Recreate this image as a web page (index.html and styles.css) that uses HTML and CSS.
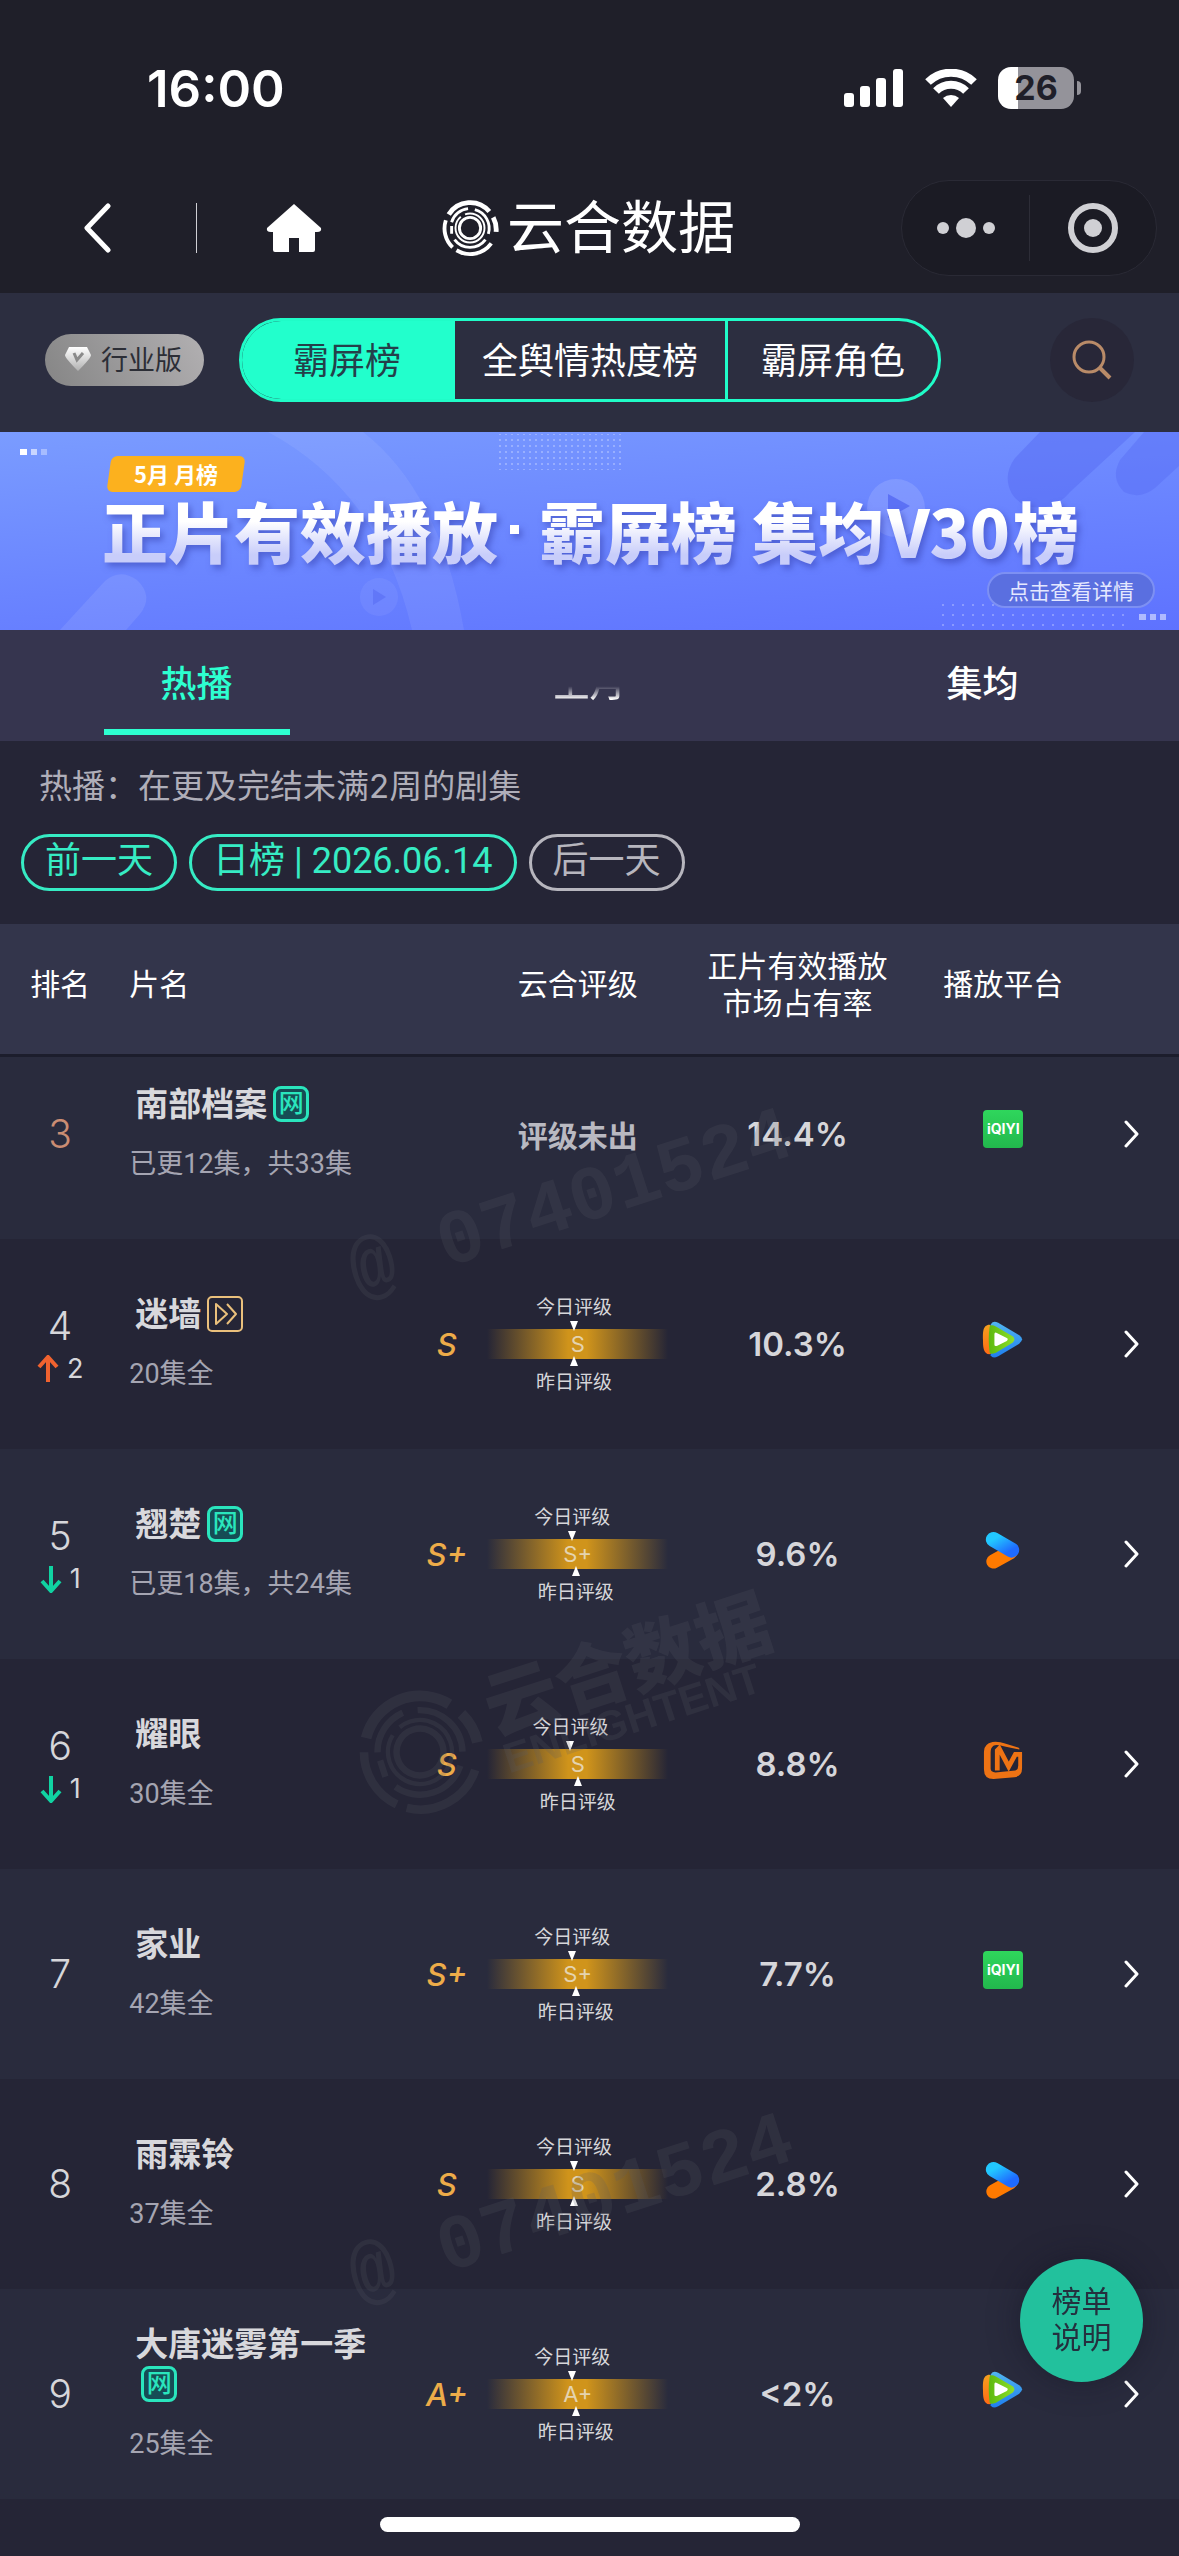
FILE: index.html
```html
<!DOCTYPE html>
<html lang="zh-CN">
<head>
    <meta charset="UTF-8">
    <meta name="viewport" content="width=device-width, initial-scale=1.0">
    <title>云合数据</title>
    <link rel="stylesheet" href="styles.css">
</head>
<body>

    <!-- shared icons -->
    <svg class="sprite" aria-hidden="true">
        <defs>
            <linearGradient id="txBlue" x1="0" y1="0" x2="0" y2="1">
                <stop offset="0" stop-color="#52b6f0"/>
                <stop offset="1" stop-color="#1f7ff0"/>
            </linearGradient>
            <linearGradient id="txOrange" x1="0" y1="0" x2="0" y2="1">
                <stop offset="0" stop-color="#f5a01e"/>
                <stop offset="1" stop-color="#ff6a14"/>
            </linearGradient>
            <linearGradient id="txGreen" x1="0" y1="0" x2="1" y2="0">
                <stop offset="0" stop-color="#5cb80e"/>
                <stop offset="1" stop-color="#8ee02a"/>
            </linearGradient>
            <linearGradient id="ykBlue" x1="0" y1="0" x2="1" y2="1">
                <stop offset="0" stop-color="#22c8ff"/>
                <stop offset="1" stop-color="#1f6bff"/>
            </linearGradient>
            <linearGradient id="gem" x1="0" y1="0" x2="0" y2="1">
                <stop offset="0" stop-color="#ffffff"/>
                <stop offset="1" stop-color="#b0b0b0"/>
            </linearGradient>
        </defs>
        <symbol id="logo" viewBox="0 0 60 60">
            <g fill="none" stroke="currentColor">
                <path d="M8 16A26 26 0 0 1 50 13M54 19A27 27 0 0 1 57 34" stroke-width="5"/>
                <path d="M5 22A27 27 0 0 0 12 50M16 53A27 27 0 0 0 52 46" stroke-width="4"/>
                <path d="M11 24A20 20 0 0 1 28 10M35 11A20 20 0 0 1 49 36M46 42A20 20 0 0 1 14 42M11 36V28" stroke-width="3"/>
                <circle cx="30" cy="30" r="15" stroke-width="2" stroke-dasharray="60 5"/>
                <circle cx="30" cy="30" r="11" stroke-width="3"/>
            </g>
        </symbol>
        <symbol id="tencent" viewBox="0 0 42 42">
            <path d="M8 5Q10 0 16 3L38 16Q44 20 38 25L16 38Q10 41 8 37Z" fill="url(#txBlue)"/>
            <path d="M7 5C-1 5 0 15 0 21S0 36 7 36Q12 34 11 20T7 5Z" fill="url(#txOrange)"/>
            <path d="M7 7Q8 4 14 7L31 17Q35 20 31 24L14 34Q8 37 7 34Q5 20 7 7Z" fill="url(#txGreen)"/>
            <path d="M12 15Q12 12 15 14L25 19Q27 20 25 22L15 27Q12 28 12 26Z" fill="#fff"/>
        </symbol>
        <symbol id="youku" viewBox="0 0 42 42">
            <path d="M11 33L29 23" stroke="#ff7a00" stroke-width="15" stroke-linecap="round"/>
            <path d="M11 10L30 21" stroke="url(#ykBlue)" stroke-width="16" stroke-linecap="round"/>
        </symbol>
        <symbol id="mango" viewBox="0 0 42 42">
            <path fill-rule="evenodd" fill="#ee7314" d="M10 2Q16 1 24 4L37 8Q39 9 38 10L24 7Q14 4 11 6Q8 8 8 13V30Q8 34 13 34L34 32Q37 31 37 27V15H41V30Q41 38 33 39L11 41Q1 41 1 31V12Q1 4 10 2Z"/>
            <path d="M15 32V11L17 9L27 28L34 15H41" fill="none" stroke="#ee7314" stroke-width="5"/>
        </symbol>
        <symbol id="next" viewBox="0 0 16 28">
            <path d="M2 2L13 14L2 26" fill="none" stroke="#fff" stroke-width="3" stroke-linecap="round" stroke-linejoin="round"/>
        </symbol>
        <symbol id="down" viewBox="0 0 22 28">
            <path d="M11 1V26M2 16L11 26L20 16" fill="none" stroke="currentColor" stroke-width="4"/>
        </symbol>
        <symbol id="member" viewBox="0 0 36 36">
            <rect x="1" y="1" width="34" height="34" rx="4" fill="none" stroke="#eac07c" stroke-width="2"/>
            <path d="M9 8V28L20 18ZM20 8L29 18L20 28" fill="none" stroke="#eac07c" stroke-width="2" stroke-linejoin="round"/>
        </symbol>
    </svg>

    <header class="top">
        <div class="status">
            <span class="time">16:00</span>
            <div class="status-icons">
                <svg width="60" height="38" viewBox="0 0 60 38" fill="#fff">
                    <rect x="0" y="24" width="10" height="14" rx="3"/>
                    <rect x="16" y="17" width="10" height="21" rx="3"/>
                    <rect x="32" y="9" width="10" height="29" rx="3"/>
                    <rect x="49" y="0" width="10" height="38" rx="3"/>
                </svg>
                <svg width="52" height="38" viewBox="0 0 52 38" fill="none" stroke="#fff" stroke-width="8">
                    <path d="M3 13A33 33 0 0 1 49 13"/>
                    <path d="M11 22A21 21 0 0 1 41 22"/>
                    <path d="M26 38L18 29A12 12 0 0 1 34 29Z" fill="#fff" stroke="none"/>
                </svg>
                <div class="battery"><span>26</span></div>
            </div>
        </div>
        <nav class="nav">
            <div class="nav-left">
                <button class="icon-btn" aria-label="返回">
                    <svg width="28" height="50" viewBox="0 0 28 50"><path d="M25 3L4 25L25 47" fill="none" stroke="#fff" stroke-width="5" stroke-linecap="round" stroke-linejoin="round"/></svg>
                </button>
                <span class="nav-line"></span>
                <button class="icon-btn" aria-label="首页">
                    <svg width="56" height="50" viewBox="0 0 56 50"><path d="M28 1L55 25Q56 29 51 29H49V47Q49 49 47 49H33V35H23V49H9Q7 49 7 47V29H5Q0 29 1 25Z" fill="#fff"/></svg>
                </button>
            </div>
            <h1 class="brand"><svg class="brand-logo"><use href="#logo"/></svg>云合数据</h1>
            <div class="capsule">
                <button class="icon-btn" aria-label="更多">
                    <svg width="60" height="24" viewBox="0 0 60 24" fill="#d0d0d4"><circle cx="7" cy="12" r="6"/><circle cx="30" cy="12" r="10"/><circle cx="53" cy="12" r="6"/></svg>
                </button>
                <button class="icon-btn" aria-label="关闭">
                    <svg width="52" height="52" viewBox="0 0 52 52"><circle cx="26" cy="26" r="22" fill="none" stroke="#d0d0d4" stroke-width="6"/><circle cx="26" cy="26" r="9" fill="#d0d0d4"/></svg>
                </button>
            </div>
        </nav>
    </header>

    <div class="toolbar">
        <button class="edition">
            <svg width="28" height="26" viewBox="0 0 28 26"><path d="M5 1H23L27 9Q27 12 14 25Q1 12 1 9Z" fill="url(#gem)"/><path d="M10 7L13 14L19 7" fill="none" stroke="#8a8a8a" stroke-width="3"/></svg>
            行业版
        </button>
        <div class="segments">
            <button class="segment on">霸屏榜</button>
            <button class="segment">全舆情热度榜</button>
            <button class="segment">霸屏角色</button>
        </div>
        <button class="search" aria-label="搜索">
            <svg width="40" height="40" viewBox="0 0 40 40" fill="none" stroke="#b98b68" stroke-width="3"><circle cx="17" cy="17" r="15"/><path d="M28 28L38 38" stroke-width="4"/></svg>
        </button>
    </div>

    <section class="banner">
        <svg class="banner-bg" viewBox="0 0 1179 198" preserveAspectRatio="xMidYMid slice" aria-hidden="true">
            <defs>
                <pattern id="dots" width="6" height="6" patternUnits="userSpaceOnUse"><circle cx="2" cy="2" r="1" fill="#fff"/></pattern>
                <pattern id="dotsWide" width="10" height="10" patternUnits="userSpaceOnUse"><circle cx="3" cy="3" r="1" fill="#fff"/></pattern>
            </defs>
            <path d="M268 0Q380 60 412 198H464Q440 60 363 0Z" fill="#fff" opacity=".07"/>
            <path d="M60 198L105 149Q120 136 137 148Q154 164 140 182L126 198Z" fill="#fff" opacity=".09"/>
            <path d="M1040 0L1015 26Q1002 44 1012 62Q1024 80 1050 74Q1062 70 1070 60L1135 0Z" fill="#5468f2" opacity=".45"/>
            <path d="M1144 0L1120 28Q1110 46 1124 60Q1140 68 1155 56L1179 34V0Z" fill="#5468f2" opacity=".4"/>
            <rect x="496" y="2" width="126" height="36" fill="url(#dots)" opacity=".35"/>
            <rect x="937" y="168" width="195" height="26" fill="url(#dotsWide)" opacity=".35"/>
            <circle cx="379" cy="165" r="19" fill="#fff" opacity=".06"/>
            <path d="M373 157L386 165L373 173Z" fill="#5468f2" opacity=".5"/>
            <circle cx="896" cy="76" r="29" fill="#fff" opacity=".13"/>
            <path d="M888 62L910 74L888 86Z" fill="#5468f2" opacity=".8"/>
            <g fill="#fff">
                <rect x="20" y="17" width="7" height="6"/>
                <rect x="31" y="17" width="6" height="6" opacity=".6"/>
                <rect x="41" y="17" width="6" height="6" opacity=".35"/>
                <path d="M1139 182h7v6h-7zM1150 182h6v6h-6zM1160 182h6v6h-6z" opacity=".5"/>
            </g>
        </svg>
        <span class="month">5月 月榜</span>
        <h2 class="headline">正片有效播放<i></i>霸屏榜 集均<span>V30</span>榜</h2>
        <a class="detail" href="#">点击查看详情</a>
    </section>

    <div class="tabs">
        <button class="tab on">热播</button>
        <button class="tab"><span class="fading">上月</span></button>
        <button class="tab">集均</button>
    </div>

    <p class="intro">热播：在更及完结未满2周的剧集</p>
    <div class="dates">
        <button class="date">前一天</button>
        <button class="date">日榜 | 2026.06.14</button>
        <button class="date off">后一天</button>
    </div>

    <main class="ranking">
        <table>
            <colgroup>
                <col class="c-rank"><col class="c-name"><col class="c-level"><col class="c-grade"><col class="c-share"><col class="c-platform"><col class="c-next">
            </colgroup>
            <thead>
                <tr>
                    <th>排名</th>
                    <th class="name">片名</th>
                    <th></th>
                    <th>云合评级</th>
                    <th>正片有效播放<br>市场占有率</th>
                    <th>播放平台</th>
                    <th></th>
                </tr>
            </thead>
            <tbody>
                <tr class="cut">
                    <td><div class="rank third">3</div></td>
                    <td class="name"><div class="title">南部档案<span class="tag">网</span></div><div class="sub">已更12集，共33集</div></td>
                    <td class="level"></td>
                    <td class="pending">评级未出</td>
                    <td class="share">14.4%</td>
                    <td><div class="iqiyi">iQIYI</div></td>
                    <td class="more"><svg class="next"><use href="#next"/></svg></td>
                </tr>
                <tr>
                    <td><div class="rank">4</div><div class="move up"><svg><use href="#down"/></svg>2</div></td>
                    <td class="name"><div class="title">迷墙<svg class="member"><use href="#member"/></svg></div><div class="sub">20集全</div></td>
                    <td class="level">S</td>
                    <td><div class="grade"><span class="today" style="left:48%">今日评级</span><b>S</b><span class="yesterday" style="left:48%">昨日评级</span></div></td>
                    <td class="share">10.3%</td>
                    <td><svg class="platform"><use href="#tencent"/></svg></td>
                    <td class="more"><svg class="next"><use href="#next"/></svg></td>
                </tr>
                <tr>
                    <td><div class="rank">5</div><div class="move"><svg><use href="#down"/></svg>1</div></td>
                    <td class="name"><div class="title">翘楚<span class="tag">网</span></div><div class="sub">已更18集，共24集</div></td>
                    <td class="level">S+</td>
                    <td><div class="grade"><span class="today" style="left:47%">今日评级</span><b>S+</b><span class="yesterday" style="left:49%">昨日评级</span></div></td>
                    <td class="share">9.6%</td>
                    <td><svg class="platform"><use href="#youku"/></svg></td>
                    <td class="more"><svg class="next"><use href="#next"/></svg></td>
                </tr>
                <tr>
                    <td><div class="rank">6</div><div class="move"><svg><use href="#down"/></svg>1</div></td>
                    <td class="name"><div class="title">耀眼</div><div class="sub">30集全</div></td>
                    <td class="level">S</td>
                    <td><div class="grade"><span class="today" style="left:46%">今日评级</span><b>S</b><span class="yesterday" style="left:50%">昨日评级</span></div></td>
                    <td class="share">8.8%</td>
                    <td><svg class="platform"><use href="#mango"/></svg></td>
                    <td class="more"><svg class="next"><use href="#next"/></svg></td>
                </tr>
                <tr>
                    <td><div class="rank">7</div></td>
                    <td class="name"><div class="title">家业</div><div class="sub">42集全</div></td>
                    <td class="level">S+</td>
                    <td><div class="grade"><span class="today" style="left:47%">今日评级</span><b>S+</b><span class="yesterday" style="left:49%">昨日评级</span></div></td>
                    <td class="share">7.7%</td>
                    <td><div class="iqiyi">iQIYI</div></td>
                    <td class="more"><svg class="next"><use href="#next"/></svg></td>
                </tr>
                <tr>
                    <td><div class="rank">8</div></td>
                    <td class="name"><div class="title">雨霖铃</div><div class="sub">37集全</div></td>
                    <td class="level">S</td>
                    <td><div class="grade"><span class="today" style="left:48%">今日评级</span><b>S</b><span class="yesterday" style="left:48%">昨日评级</span></div></td>
                    <td class="share">2.8%</td>
                    <td><svg class="platform"><use href="#youku"/></svg></td>
                    <td class="more"><svg class="next"><use href="#next"/></svg></td>
                </tr>
                <tr>
                    <td><div class="rank">9</div></td>
                    <td class="name"><div class="title">大唐迷雾第一季<span class="tag">网</span></div><div class="sub">25集全</div></td>
                    <td class="level">A+</td>
                    <td><div class="grade"><span class="today" style="left:47%">今日评级</span><b>A+</b><span class="yesterday" style="left:49%">昨日评级</span></div></td>
                    <td class="share">&lt;2%</td>
                    <td><svg class="platform"><use href="#tencent"/></svg></td>
                    <td class="more"><svg class="next"><use href="#next"/></svg></td>
                </tr>
            </tbody>
        </table>

        <!-- watermark over the list -->
        <svg class="watermark" viewBox="0 0 1179 1576" aria-hidden="true">
            <text class="wm-id" transform="translate(358 372) rotate(-18)">@ 07401524</text>
            <g transform="translate(420 828) rotate(-18)">
                <use href="#logo" x="-64" y="-64" width="128" height="128"/>
                <text class="wm-name" x="76" y="8">云合数据</text>
                <text class="wm-en" x="78" y="48">ENLIGHTENT</text>
            </g>
            <text class="wm-id" transform="translate(358 1377) rotate(-18)">@ 07401524</text>
        </svg>
    </main>

    <button class="help">榜单<br>说明</button>
    <div class="home-bar"></div>

</body>
</html>
```

FILE: styles.css
```css
* {
    box-sizing: border-box;
}
body {
    margin: 0;
    min-height: 100vh;
    background-color: #252536;
    color: #fff;
    font-family: Inter, "Noto Sans CJK SC", sans-serif;
    overflow: hidden;
}
button {
    margin: 0;
    padding: 0;
    border: 0;
    background: none;
    color: inherit;
    font-family: inherit;
    cursor: pointer;
}
svg {
    display: block;
}
.sprite {
    position: absolute;
    width: 0;
    height: 0;
}

/* status bar and nav */
.top {
    background-color: #1f1f29;
    padding-bottom: 13px;
}
.status {
    display: flex;
    align-items: center;
    justify-content: space-between;
    height: 176px;
    padding: 0 105px 0 147px;
}
.time {
    font-size: 51px;
    font-weight: 600;
}
.status-icons {
    display: flex;
    align-items: center;
    gap: 21px;
}
.battery {
    position: relative;
    width: 76px;
    height: 42px;
    border-radius: 13px;
    background: linear-gradient(90deg, #fff 26%, #94939a 26%);
    color: #1f1f29;
    font-size: 34px;
    font-weight: 700;
    line-height: 42px;
    text-align: center;
}
.battery::after {
    content: "";
    position: absolute;
    right: -7px;
    top: 14px;
    width: 4px;
    height: 14px;
    border-radius: 0 4px 4px 0;
    background-color: #94939a;
}
.nav {
    display: grid;
    grid-template-columns: 1fr auto 1fr;
    align-items: center;
    height: 104px;
    padding: 0 22px 0 83px;
}
.nav-left {
    display: flex;
    align-items: center;
    margin-right: -60px;
}
.nav-line {
    width: 1px;
    height: 50px;
    margin: 0 69px 0 85px;
    background-color: #cfcfd4;
}
.brand {
    display: flex;
    align-items: center;
    gap: 8px;
    margin: 0 64px 0 0;
    font-size: 57px;
    font-weight: 400;
    line-height: 60px;
}
.brand-logo {
    width: 58px;
    height: 58px;
}
.capsule {
    justify-self: end;
    display: grid;
    grid-template-columns: 1fr 1fr;
    width: 256px;
    height: 96px;
    border: 1px solid #2a2a35;
    border-radius: 48px;
    background-color: #1b1b24;
}
.capsule .icon-btn {
    display: flex;
    align-items: center;
    justify-content: center;
}
.capsule .icon-btn + .icon-btn {
    background: linear-gradient(#2d2d37, #2d2d37) left center / 1px 66px no-repeat;
}

/* list type switch */
.toolbar {
    display: flex;
    align-items: center;
    height: 139px;
    padding: 0 45px 5px;
    background-color: #2c2e40;
}
.edition {
    display: flex;
    align-items: center;
    gap: 9px;
    height: 52px;
    padding: 0 22px 3px 19px;
    border-radius: 26px;
    background: linear-gradient(60deg, #858585, #b2b0b2);
    color: #2c2e36;
    font-size: 27px;
}
.segments {
    display: flex;
    height: 84px;
    margin-left: 35px;
    border: 3px solid #20fcc8;
    border-radius: 42px;
    overflow: hidden;
}
.segment {
    padding: 0 27px 5px;
    font-size: 36px;
}
.segment:first-child {
    padding: 0 54px 5px 51px;
}
.segment:last-child {
    padding: 0 33px 5px;
    border-left: 3px solid #20fcc8;
}
.segment.on {
    background-color: #22ffcc;
    color: #24404a;
}
.search {
    display: flex;
    align-items: center;
    justify-content: center;
    width: 84px;
    height: 84px;
    margin-left: auto;
    border-radius: 50%;
    background-color: #282738;
}

/* banner */
.banner {
    position: relative;
    height: 198px;
    padding: 24px 24px 0 109px;
    background: linear-gradient(175deg, #7a9cff, #6a84ff 55%, #5e72ff);
    font-family: "Noto Sans CJK SC", sans-serif;
}
.banner-bg {
    position: absolute;
    inset: 0;
    width: 100%;
    height: 100%;
}
.month {
    position: relative;
    z-index: 0;
    display: block;
    width: 134px;
    height: 36px;
    line-height: 34px;
    text-align: center;
    font-size: 22px;
    font-weight: 700;
}
.month::before {
    content: "";
    position: absolute;
    z-index: -1;
    inset: 0;
    border-radius: 6px;
    background-color: #fcb11e;
    transform: skewX(-8deg);
}
.headline {
    position: relative;
    display: flex;
    align-items: center;
    width: max-content;
    margin: 0 0 6px -7px;
    white-space: pre;
    font-size: 66px;
    font-weight: 900;
    line-height: 74px;
    color: transparent;
    background: linear-gradient(#fff 40%, #c8cdfa 85%);
    -webkit-background-clip: text;
    background-clip: text;
    filter: drop-shadow(3px 4px 3px rgba(50, 60, 170, .5));
}
.headline i {
    width: 9px;
    height: 9px;
    margin: 0 20px 0 12px;
    background-color: #fff;
}
.headline span {
    padding: 0 3px;
}
.detail {
    position: relative;
    display: block;
    width: max-content;
    margin: 0 0 0 auto;
    padding: 0 19px;
    border: 2px solid #7d90f3;
    border-radius: 18px;
    background-color: #5a6fe0;
    color: #e4e8ff;
    font-size: 21px;
    line-height: 32px;
    text-decoration: none;
}

/* tabs */
.tabs {
    display: grid;
    grid-template-columns: repeat(3, 1fr);
    height: 111px;
    background-color: #36354f;
}
.tab {
    position: relative;
    padding-bottom: 9px;
    font-size: 36px;
    font-weight: 500;
}
.tab.on {
    color: #2dffd0;
}
.tab.on::after {
    content: "";
    position: absolute;
    left: 50%;
    bottom: 6px;
    width: 186px;
    height: 6px;
    margin-left: -93px;
    background-color: #2dffd0;
}
.fading {
    color: transparent;
    background: linear-gradient(transparent 55%, #fff 85%);
    -webkit-background-clip: text;
    background-clip: text;
}

/* date filter */
.intro {
    margin: 0;
    padding: 21px 39px 24px;
    color: #afaeb9;
    font-size: 33px;
    line-height: 48px;
}
.dates {
    display: flex;
    gap: 12px;
    padding: 0 21px 33px;
}
.date {
    height: 57px;
    padding: 0 21px 3px;
    border: 3px solid #36ecc4;
    border-radius: 29px;
    color: #36ecc4;
    font-family: Roboto, "Noto Sans CJK SC", sans-serif;
    font-size: 36px;
    line-height: 46px;
}
.date.off {
    border-color: #b7b6be;
    color: #b7b6be;
}

/* ranking table */
.ranking {
    position: relative;
}
table {
    width: 100%;
    table-layout: fixed;
    border-collapse: collapse;
}
.c-rank { width: 10.2%; }
.c-name { width: 24.3%; }
.c-level { width: 6.8%; }
.c-grade { width: 15.4%; }
.c-share { width: 21.9%; }
.c-platform { width: 13%; }
.c-next { width: 8.4%; }
th {
    height: 131px;
    padding: 0 0 8px;
    background-color: #33354b;
    border-bottom: 3px solid #1c1d2c;
    font-size: 30px;
    font-weight: 400;
    line-height: 37px;
    white-space: nowrap;
}
td {
    height: 210px;
    padding: 0;
    text-align: center;
    vertical-align: middle;
    background-color: #252536;
}
tr:nth-child(odd) td {
    background-color: #292b3d;
}
.cut td {
    height: 184px;
    padding-bottom: 28px;
}
th.name, td.name {
    padding-left: 9px;
    padding-right: 10px;
    text-align: left;
}
.rank {
    color: #d6d6da;
    font-size: 39px;
    font-weight: 300;
    line-height: 46px;
}
.rank:not(:last-child) {
    padding-top: 4px;
}
.rank.third {
    color: #cb8d73;
}
.move {
    display: flex;
    align-items: center;
    justify-content: center;
    gap: 8px;
    color: #d6d6da;
    font-size: 27px;
    line-height: 40px;
}
.move svg {
    width: 22px;
    height: 28px;
    color: #10d3a2;
}
.move.up svg {
    color: #f0622f;
    transform: rotate(180deg);
}
.title {
    padding-left: 6px;
    color: #d8d8dc;
    font-size: 33px;
    font-weight: 700;
    line-height: 40px;
}
.tag, .member {
    display: inline-block;
    width: 36px;
    height: 36px;
    margin: 2px 0 0 6px;
    vertical-align: top;
}
.tag {
    border: 3px solid #2ae5bd;
    border-radius: 8px;
    background-color: #164c55;
    color: #2ae5bd;
    font-size: 25px;
    font-weight: 500;
    line-height: 28px;
    text-align: center;
}
.sub {
    margin-top: 20px;
    color: #a5a5b2;
    font-family: Roboto, "Noto Sans CJK SC", sans-serif;
    font-size: 27px;
    line-height: 40px;
    white-space: nowrap;
}
.level {
    color: #edac49;
    font-size: 31px;
    font-style: italic;
    font-weight: 500;
}
.pending {
    color: #b9b9c1;
    font-family: "Noto Sans CJK SC", sans-serif;
    font-size: 30px;
    font-weight: 700;
}
.grade {
    position: relative;
    height: 30px;
    background: linear-gradient(90deg, transparent, #d0941b 45%, #d0941b 55%, transparent);
    line-height: 30px;
}
.grade b {
    color: #e4d3b0;
    font-size: 22px;
    font-weight: 400;
}
.today, .yesterday {
    position: absolute;
    transform: translateX(-50%);
    color: #d6d6da;
    font-size: 19px;
    line-height: 28px;
    white-space: nowrap;
}
.today {
    bottom: 100%;
    padding-bottom: 7px;
}
.yesterday {
    top: 100%;
    padding-top: 10px;
}
.today::after, .yesterday::after {
    content: "";
    position: absolute;
    left: 50%;
    margin-left: -4px;
    border: 4px solid transparent;
}
.today::after {
    bottom: -2px;
    border-top: 10px solid #fff;
    border-bottom: 0;
}
.yesterday::after {
    top: -3px;
    border-bottom: 10px solid #fff;
    border-top: 0;
}
.share {
    color: #d6d6da;
    font-size: 33px;
    font-weight: 600;
}
.platform {
    width: 42px;
    height: 40px;
    margin: 0 auto 8px;
}
.iqiyi {
    width: 40px;
    height: 38px;
    margin: 0 auto 9px;
    border-radius: 4px;
    background: linear-gradient(#2fd65c, #22b84d);
    font-size: 14px;
    font-weight: 700;
    line-height: 38px;
}
.more {
    padding-left: 5px;
}
.next {
    width: 16px;
    height: 28px;
    margin: 0 auto;
}

/* watermark */
.watermark {
    position: absolute;
    left: 0;
    top: 0;
    width: 100%;
    color: #5a5c66;
    fill: #5a5c66;
    opacity: .2;
    pointer-events: none;
}
.wm-id {
    font: 700 77px "Liberation Mono", monospace;
}
.wm-name {
    font: 900 74px "Noto Sans CJK SC", sans-serif;
}
.wm-en {
    font: 700 42px "Liberation Sans", sans-serif;
}

.help {
    position: fixed;
    right: 36px;
    bottom: 174px;
    width: 123px;
    height: 123px;
    padding-bottom: 3px;
    border-radius: 50%;
    background-color: #22c19d;
    box-shadow: 0 0 30px rgba(20, 20, 35, .5);
    color: #24303f;
    font-size: 30px;
    line-height: 36px;
}
.home-bar {
    position: fixed;
    left: 50%;
    bottom: 24px;
    width: 420px;
    height: 15px;
    margin-left: -210px;
    border-radius: 8px;
    background-color: #fff;
}
```
